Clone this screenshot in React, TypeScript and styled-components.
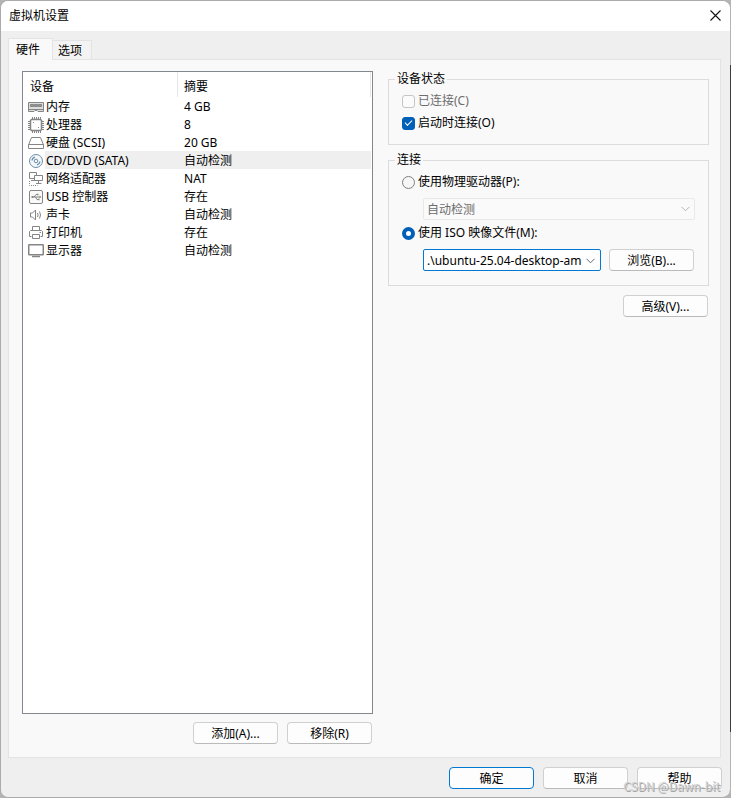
import React, { useState } from "react";
import styled, { createGlobalStyle, css } from "styled-components";

const GlobalStyle = createGlobalStyle`
  *, *::before, *::after { box-sizing: border-box; }
  body { margin: 0; background: #b4b4b4; }
  body, button, input, select {
    font-family: "Noto Sans", "Noto Sans CJK SC", sans-serif;
    font-size: 12px;
    line-height: 16px;
    color: #000;
  }
`;

const Desktop = styled.div`
  min-height: 100vh;
  display: flex;
  background: linear-gradient(to bottom, #b4b4b4 65px, #3c3c3c 65px, #3c3c3c calc(100% - 66px), #b4b4b4 calc(100% - 66px));
`;

const Dialog = styled.main`
  position: relative;
  flex: 1;
  display: flex;
  flex-direction: column;
  margin-right: 1px;
  border: 1px solid #ababab;
  border-right: 0;
  border-radius: 8px;
  overflow: hidden;
  background: #efefef;
`;

const TitleBar = styled.header`
  display: flex;
  align-items: center;
  justify-content: space-between;
  height: 30px;
  padding: 0 8px;
  background: #fff;
`;

const Title = styled.h1`
  margin: 0;
  font-size: 12px;
  font-weight: 400;
`;

const CloseButton = styled.button`
  display: flex;
  padding: 0 1px 2px;
  border: 0;
  background: none;
`;

const TabBar = styled.div`
  display: flex;
  align-items: flex-end;
  padding: 7px 7px 0;
`;

const Tab = styled.button<{ $active?: boolean }>`
  height: 19px;
  padding: 2px 9px 0 5px;
  border: 1px solid #e3e3e3;
  border-left: 0;
  border-bottom: 0;
  background: #f3f3f3;
  ${(p) =>
    p.$active &&
    css`
      position: relative;
      z-index: 1;
      height: 22px;
      margin-bottom: -1px;
      padding: 0 12px 0 7px;
      border-left: 1px solid #e3e3e3;
      background: #f9f9f9;
    `}
`;

const Panel = styled.section`
  flex: 1;
  display: grid;
  grid-template-columns: 351fr 321fr;
  gap: 15px;
  margin: 0 9px 0 7px;
  padding: 11px 11px 13px 13px;
  border: 1px solid #e3e3e3;
  background: #f9f9f9;
`;

const Column = styled.div<{ $gap?: number }>`
  display: flex;
  flex-direction: column;
  min-width: 0;
  gap: ${(p) => p.$gap ?? 8}px;
`;

const ListBox = styled.div`
  flex: 1;
  border: 1px solid #828790;
  background: #fff;
`;

const DeviceTable = styled.table`
  width: calc(100% - 1px);
  table-layout: fixed;
  border-collapse: separate;
  border-spacing: 0;
  th {
    height: 25px;
    padding: 5px 6px 0;
    border-right: 1px solid #e5e5e5;
    font-weight: 400;
    text-align: left;
  }
  th:first-child { padding-left: 7px; }
  td { height: 18px; padding: 2px 0 0; white-space: nowrap; }
  td + td { padding-left: 1px; }
  td + td + td { padding-left: 6px; }
`;

const IconCol = styled.col` width: 22px; `;
const NameCol = styled.col` width: 133px; `;

const DeviceRow = styled.tr<{ $selected: boolean }>`
  td + td { background: ${(p) => (p.$selected ? "#efefef" : "transparent")}; }
`;

const IconCell = styled.td`
  svg { display: block; margin-left: 5px; }
`;

const ButtonRow = styled.div`
  display: flex;
  justify-content: flex-end;
  gap: 9px;
  padding-right: 1px;
`;

const Footer = styled.footer`
  display: flex;
  justify-content: flex-end;
  gap: 9px;
  padding: 9px 8px 8px;
`;

const Button = styled.button<{ $primary?: boolean }>`
  flex: none;
  width: 85px;
  height: 22px;
  padding: 1px 0 0;
  border: 1px solid ${(p) => (p.$primary ? "#0078d4" : "#d0d0d0")};
  border-bottom-color: ${(p) => (p.$primary ? "#0078d4" : "#bababa")};
  border-radius: 4px;
  background: #fdfdfd;
`;

const Group = styled.fieldset`
  min-width: 0;
  margin: 0;
  padding: 3px 13px 10px 13px;
  border: 1px solid #dcdcdc;
  legend { margin-left: -7px; padding: 0 2px; height: 16px; }
  & + & { padding-bottom: 12px; }
`;

const Choice = styled.label<{ $disabled?: boolean }>`
  display: flex;
  align-items: center;
  gap: 3px;
  height: 22px;
  color: ${(p) => (p.$disabled ? "#6d6d6d" : "#000")};
`;

const CheckBox = styled.input.attrs({ type: "checkbox" })`
  appearance: none;
  display: grid;
  place-items: center;
  width: 13px;
  height: 13px;
  margin: 0;
  border: 1px solid #8a8a8a;
  border-radius: 3px;
  background: #fff;
  &:disabled { border-color: #c5c5c5; background: #fbfbfb; }
  &:checked { border-color: #005fb8; background: #005fb8; }
  &:checked::after {
    content: "";
    width: 7px;
    height: 4px;
    margin-bottom: 2px;
    border: solid #fff;
    border-width: 0 0 1px 1px;
    transform: rotate(-45deg);
  }
`;

const Radio = styled.input.attrs({ type: "radio" })`
  appearance: none;
  width: 13px;
  height: 13px;
  margin: 0;
  border: 1px solid #808080;
  border-radius: 50%;
  background: #f6f6f6;
  &:checked { border: 4px solid #005fb8; background: #fff; }
`;

const Indented = styled.div`
  display: flex;
  align-items: center;
  gap: 8px;
  margin: 5px 0 2px 21px;
  button:last-child { margin-right: 1px; }
`;

const Combo = styled.div<{ $disabled?: boolean }>`
  flex: 1;
  min-width: 0;
  display: grid;
  grid-template-columns: 1fr 18px;
  align-items: center;
  height: 22px;
  border: 1px solid ${(p) => (p.$disabled ? "#e8e8e8" : "#0078d4")};
  border-radius: 2px;
  background: ${(p) => (p.$disabled ? "#fafafa" : "#fff")};
  svg { grid-area: 1 / 2; justify-self: center; pointer-events: none; }
`;

const Select = styled.select`
  grid-area: 1 / 1 / 2 / 3;
  appearance: none;
  height: 20px;
  padding: 1px 3px 0;
  border: 0;
  background: none;
  &:disabled { color: #6d6d6d; opacity: 1; }
`;

const PathInput = styled.input`
  width: 100%;
  min-width: 0;
  height: 18px;
  padding: 0 0 0 3px;
  border: 0;
  outline: 0;
  background: none;
`;

const DropButton = styled.button`
  display: flex;
  justify-content: center;
  padding: 2px 0 0;
  border: 0;
  background: none;
`;

const Watermark = styled.span`
  position: absolute;
  right: 10px;
  bottom: 3px;
  color: #d2d2d2;
  font-family: "Noto Sans CJK SC", sans-serif;
  font-size: 12px;
  text-shadow: 1px 1px 0 #a4a4a4;
  pointer-events: none;
`;

const Chevron = ({ color }: { color: string }) => (
  <svg width="9" height="6" viewBox="0 0 9 6" fill="none" stroke={color}>
    <path d="M.5.8l4 4 4-4" />
  </svg>
);

type IconName = "memory" | "cpu" | "disk" | "cd" | "network" | "usb" | "sound" | "printer" | "display";

const drawings: Record<IconName, React.ReactNode> = {
  memory: (
    <>
      <path d="M.5 3.5h15v9h-5.500l-1-1H7l-1 1H.5z" fill="#ddd" />
      <path d="M2.500 5.500h3v2h-3zM6.500 5.500h3v2h-3zM10.500 5.500h3v2h-3z" fill="#999" />
      <path d="M1 10.500h14" />
    </>
  ),
  cpu: (
    <>
      <path d="M3.500 2.500h9l1 1v9l-1 1h-9l-1-1v-9z" strokeWidth="1.500" />
      <path d="M4.500 0v2M6.500 0v2M8.500 0v2M10.500 0v2M12.500 0v2M4.500 14v2M6.500 14v2M8.500 14v2M10.500 14v2M12.500 14v2M0 4.500h2M0 6.500h2M0 8.500h2M0 10.500h2M0 12.500h2M14 4.500h2M14 6.500h2M14 8.500h2M14 10.500h2M14 12.500h2" />
      <path d="M5 5h1v1H5zM10 10h1v1h-1z" fill="#888" stroke="none" />
    </>
  ),
  disk: (
    <>
      <path d="M3.500 2.500h9l3 7.500v3.500H.5V10z" />
      <path d="M.5 9.500h15" />
    </>
  ),
  cd: (
    <g stroke="#6f8ea8">
      <circle cx="8" cy="8" r="6.500" fill="#f3f8fc" />
      <circle cx="8" cy="8" r="1.800" />
      <path d="M4 7.500A4 4 0 0 1 7 4.200M12 8.500A4 4 0 0 1 9 11.800" strokeWidth="1.300" />
    </g>
  ),
  network: (
    <>
      <path d="M1.500 1.500h7v6h-7zM3 9.500h4" />
      <path d="M6.500 4.500h8v5h-8z" fill="#fff" />
      <path d="M10.500 9.500v3M8 12.500h5.500" />
      <path d="M1.500 10v4.500h8" strokeDasharray="1 1" />
    </>
  ),
  usb: (
    <>
      <rect x="1.500" y="1.500" width="13" height="13" rx="1.500" fill="#fafafa" />
      <path d="M4 8h8.500M6 8l2-2.500h1.500M7.500 8l1.500 2.500h1.500" />
      <path d="M3.500 7h2v2h-2zM9 4.800h1.500v1.500H9zM10 9.700h1.500v1.500H10zM11.500 6.500L13.300 8l-1.800 1.500z" fill="#888" stroke="none" />
    </>
  ),
  sound: (
    <>
      <path d="M2.500 6h2l3-3v10l-3-3h-2z" />
      <path d="M9.500 6q1.200 2 0 4M11.500 4.500q2 3.500 0 7" />
    </>
  ),
  printer: (
    <>
      <path d="M4.500 5.500v-4h7v4M3.500 11.500h-2v-5l1-1h11l1 1v5h-2" />
      <path d="M4.500 9.500h7v4h-7z" />
      <path d="M11.500 7.500h1.500" />
    </>
  ),
  display: (
    <>
      <rect x=".75" y="1.750" width="14.500" height="10" rx=".5" strokeWidth="1.500" />
      <path d="M4 13.500h8" strokeWidth="1.500" />
    </>
  ),
};

const DeviceIcon = ({ name }: { name: IconName }) => (
  <svg width="16" height="16" viewBox="0 0 16 16" fill="none" stroke="#858585" aria-hidden="true">
    {drawings[name]}
  </svg>
);

const devices: { icon: IconName; name: string; summary: string }[] = [
  { icon: "memory", name: "内存", summary: "4 GB" },
  { icon: "cpu", name: "处理器", summary: "8" },
  { icon: "disk", name: "硬盘 (SCSI)", summary: "20 GB" },
  { icon: "cd", name: "CD/DVD (SATA)", summary: "自动检测" },
  { icon: "network", name: "网络适配器", summary: "NAT" },
  { icon: "usb", name: "USB 控制器", summary: "存在" },
  { icon: "sound", name: "声卡", summary: "自动检测" },
  { icon: "printer", name: "打印机", summary: "存在" },
  { icon: "display", name: "显示器", summary: "自动检测" },
];

export default function App() {
  const [selected, setSelected] = useState(3);
  const [source, setSource] = useState("iso");

  return (
    <Desktop>
      <GlobalStyle />
      <Dialog>
        <TitleBar>
          <Title>虚拟机设置</Title>
          <CloseButton aria-label="关闭">
            <svg width="11" height="11" viewBox="0 0 11 11" stroke="#111" strokeWidth="1.100">
              <path d="M.5.5l10 10M10.500.5l-10 10" />
            </svg>
          </CloseButton>
        </TitleBar>

        <TabBar role="tablist">
          <Tab role="tab" aria-selected="true" $active>硬件</Tab>
          <Tab role="tab" aria-selected="false">选项</Tab>
        </TabBar>

        <Panel role="tabpanel">
          <Column>
            <ListBox>
              <DeviceTable>
                <colgroup>
                  <IconCol />
                  <NameCol />
                  <col />
                </colgroup>
                <thead>
                  <tr>
                    <th colSpan={2}>设备</th>
                    <th>摘要</th>
                  </tr>
                </thead>
                <tbody>
                  {devices.map((d, i) => (
                    <DeviceRow key={d.name} $selected={i === selected} onClick={() => setSelected(i)}>
                      <IconCell><DeviceIcon name={d.icon} /></IconCell>
                      <td>{d.name}</td>
                      <td>{d.summary}</td>
                    </DeviceRow>
                  ))}
                </tbody>
              </DeviceTable>
            </ListBox>
            <ButtonRow>
              <Button>添加(A)...</Button>
              <Button>移除(R)</Button>
            </ButtonRow>
          </Column>

          <Column $gap={9}>
            <Column $gap={7}>
              <Group>
                <legend>设备状态</legend>
                <Choice $disabled>
                  <CheckBox disabled />
                  已连接(C)
                </Choice>
                <Choice>
                  <CheckBox defaultChecked />
                  启动时连接(O)
                </Choice>
              </Group>

              <Group>
                <legend>连接</legend>
                <Choice>
                  <Radio name="source" checked={source === "drive"} onChange={() => setSource("drive")} />
                  使用物理驱动器(P):
                </Choice>
                <Indented>
                  <Combo $disabled>
                    <Select disabled aria-label="物理驱动器">
                      <option>自动检测</option>
                    </Select>
                    <Chevron color="#b5b5b5" />
                  </Combo>
                </Indented>
                <Choice>
                  <Radio name="source" checked={source === "iso"} onChange={() => setSource("iso")} />
                  使用 ISO 映像文件(M):
                </Choice>
                <Indented>
                  <Combo>
                    <PathInput aria-label="ISO 映像文件" defaultValue=".\ubuntu-25.04-desktop-amd64.iso" />
                    <DropButton aria-label="展开"><Chevron color="#666" /></DropButton>
                  </Combo>
                  <Button>浏览(B)...</Button>
                </Indented>
              </Group>
            </Column>

            <ButtonRow>
              <Button>高级(V)...</Button>
            </ButtonRow>
          </Column>
        </Panel>

        <Footer>
          <Button $primary>确定</Button>
          <Button>取消</Button>
          <Button>帮助</Button>
        </Footer>
        <Watermark>CSDN @Dawn-bit</Watermark>
      </Dialog>
    </Desktop>
  );
}
